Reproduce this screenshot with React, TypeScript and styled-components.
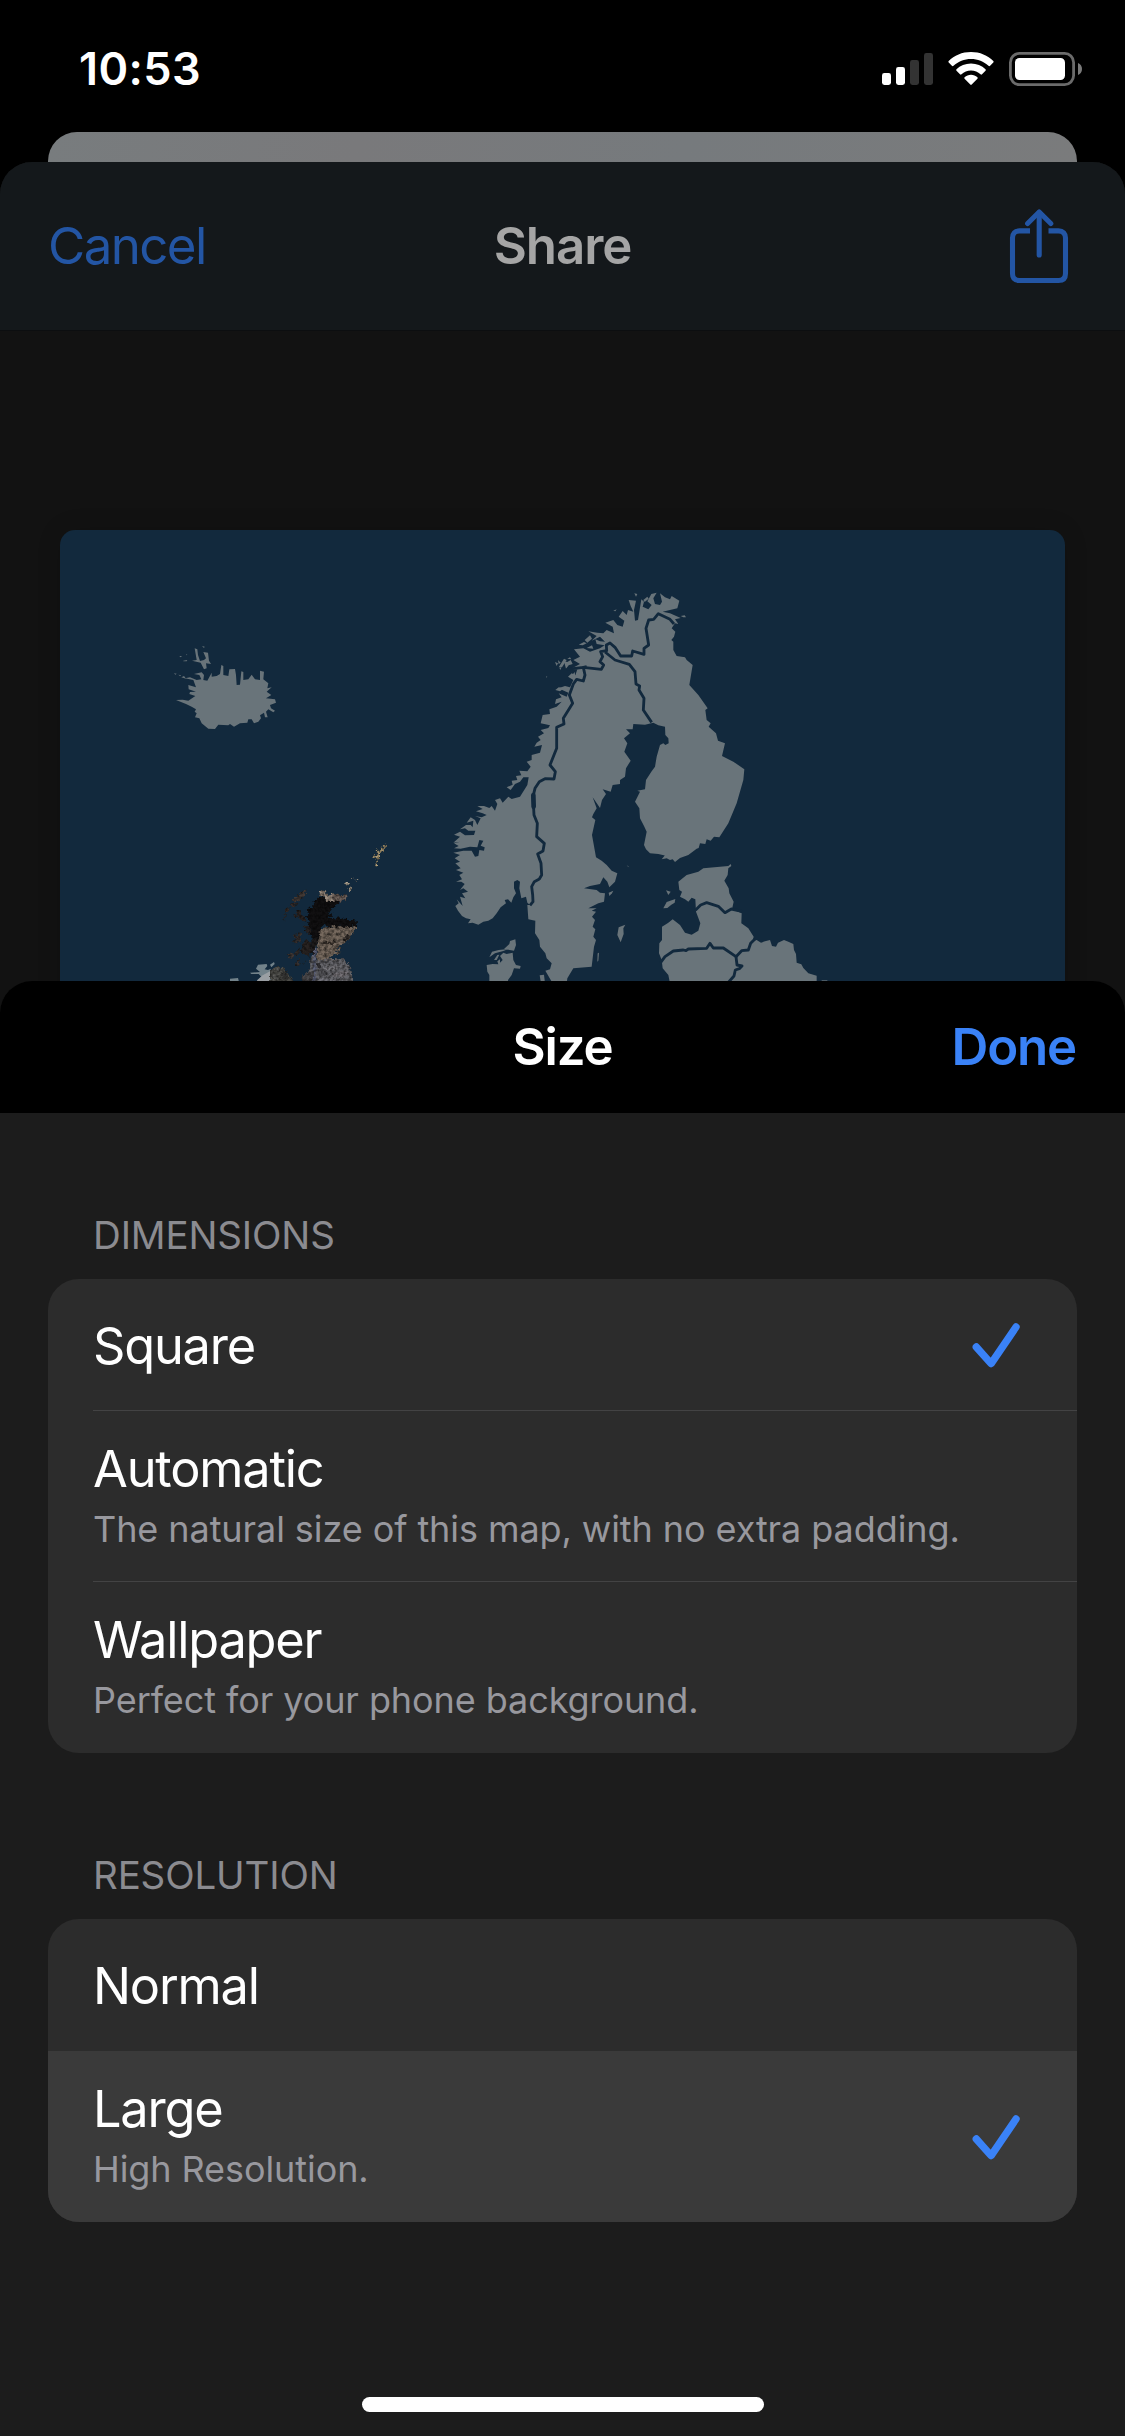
import React from "react";
import styled, { createGlobalStyle } from "styled-components";

const GlobalStyle = createGlobalStyle`
  * { box-sizing: border-box; }
  html, body { margin: 0; background: #000; }
  body {
    font-family: Inter, "Liberation Sans", sans-serif;
    -webkit-font-smoothing: antialiased;
  }
`;

const Phone = styled.main`
  display: flex;
  flex-direction: column;
  width: 1125px;
  height: 2436px;
  overflow: hidden;
  background: #000;
`;

const StatusBar = styled.header`
  display: flex;
  flex: none;
  justify-content: space-between;
  align-items: flex-start;
  height: 132px;
  padding: 41px 43px 0 79px;
  color: #fff;
`;

const Clock = styled.time`
  font-size: 45px;
  font-weight: 600;
  line-height: 55px;
  letter-spacing: 0.4px;
`;

const StatusIcons = styled.div`
  display: flex;
  align-items: center;
  gap: 15px;
  padding-top: 11px;
`;

const BackSheet = styled.div`
  flex: none;
  height: 30px;
  margin: 0 48px;
  border-radius: 29px 29px 0 0;
  background: linear-gradient(100deg, #787c7e, #79797b 30%, #767a7d 62%, #7a7b7c);
`;

const ShareSheet = styled.section`
  display: flex;
  flex: none;
  flex-direction: column;
  height: 851px;
  border-radius: 32px 32px 0 0;
  overflow: hidden;
  background: #121212;
`;

const ShareBar = styled.div`
  display: grid;
  flex: none;
  grid-template-columns: 1fr auto 1fr;
  align-items: center;
  height: 169px;
  padding: 0 48px;
  border-bottom: 1px solid #0c0e10;
  background: #14181b;
`;

const BarTitle = styled.h1<{ $dim?: boolean }>`
  margin: 0;
  font-size: 51px;
  font-weight: 600;
  line-height: 62px;
  letter-spacing: -1.1px;
  color: ${(p) => (p.$dim ? "#a5a5a5" : "#fff")};
`;

const BarButton = styled.button<{ $strong?: boolean; $end?: boolean }>`
  justify-self: ${(p) => (p.$end ? "end" : "start")};
  padding: 0;
  border: 0;
  background: none;
  font-family: inherit;
  font-size: 51px;
  font-weight: ${(p) => (p.$strong ? 600 : 400)};
  line-height: 62px;
  letter-spacing: ${(p) => (p.$strong ? -1.2 : -1.6)}px;
  color: ${(p) => (p.$strong ? "#3a82f7" : "#2355a4")};
`;

const IconButton = styled.button`
  display: flex;
  justify-self: end;
  margin-right: 8px;
  padding: 0;
  border: 0;
  background: none;
`;

const MapCard = styled.div`
  flex: none;
  margin: 199px 60px 0;
  height: 483px;
  border-radius: 15px 15px 0 0;
  overflow: hidden;
  background: #12293d;
  box-shadow: 0 0 24px rgba(0, 0, 0, 0.14);
`;

const SizeSheet = styled.section`
  display: flex;
  flex: 1;
  flex-direction: column;
  margin-top: -32px;
  border-radius: 32px 32px 0 0;
  overflow: hidden;
  background: #1c1c1c;
  isolation: isolate;
`;

const SizeBar = styled.div`
  display: grid;
  flex: none;
  grid-template-columns: 1fr auto 1fr;
  align-items: center;
  height: 132px;
  padding: 0 49px;
  background: #000;
`;

const Section = styled.section`
  flex: none;
  padding: 99px 48px 0;
`;

const SectionLabel = styled.h2`
  margin: 0 0 21px;
  padding-left: 45px;
  font-size: 38.5px;
  font-weight: 400;
  line-height: 46px;
  letter-spacing: -0.15px;
  color: #8b8b90;
`;

const Group = styled.div`
  display: flex;
  flex-direction: column;
  border-radius: 31px;
  overflow: hidden;
  background: #2c2c2c;
`;

const Row = styled.div<{ $tall?: boolean; $active?: boolean }>`
  display: flex;
  padding-left: 45px;
  height: ${(p) => (p.$tall ? 171 : 132)}px;
  background: ${(p) => (p.$active ? "#3a3a3a" : "transparent")};
`;

const RowBody = styled.div<{ $line?: boolean }>`
  display: flex;
  flex: 1;
  align-items: center;
  justify-content: space-between;
  padding-right: 57px;
  border-bottom: ${(p) => (p.$line ? "1px solid #434344" : "0")};
`;

const RowTitle = styled.div`
  font-size: 50.5px;
  line-height: 60px;
  letter-spacing: -1.2px;
  color: #fff;
`;

const RowNote = styled.div`
  margin-top: 8px;
  font-size: 36px;
  line-height: 44px;
  letter-spacing: -0.08px;
  color: #98989e;
`;

const RowText = styled.div<{ $tall?: boolean }>`
  align-self: ${(p) => (p.$tall ? "flex-start" : "center")};
  padding-top: ${(p) => (p.$tall ? 28 : 2)}px;
`;

const HomeIndicator = styled.div`
  flex: none;
  width: 402px;
  height: 15px;
  margin: auto auto 24px 362px;
  border-radius: 8px;
  background: #fff;
`;

function SignalIcon() {
  return (
    <svg width="51" height="34" viewBox="0 0 51 34">
      <rect x="0" y="21" width="9" height="12" rx="2.4" fill="#fff" />
      <rect x="14" y="15" width="9" height="18" rx="2.4" fill="#fff" />
      <rect x="28" y="8" width="9" height="25" rx="2.4" fill="#333" />
      <rect x="42" y="1" width="9" height="32" rx="2.4" fill="#333" />
    </svg>
  );
}

function WifiIcon() {
  return (
    <svg width="46" height="34" viewBox="0 0 46 34" fill="#fff">
      <path d="M23 0C31.800 0 39.800 3.400 45.300 9C45.800 9.500 45.800 10.100 45.300 10.600L42.100 13.800C41.600 14.300 41 14.300 40.500 13.800C35.800 9.500 29.700 7 23 7C16.300 7 10.200 9.500 5.500 13.800C5 14.300 4.400 14.300 3.900 13.800L.7 10.600C.2 10.100 .2 9.500 .7 9C6.200 3.400 14.200 0 23 0Z" />
      <path d="M23 11.500C28.700 11.500 33.800 13.700 37.500 17.300C38 17.800 38 18.300 37.500 18.800L34 22.300C33.500 22.800 33 22.800 32.500 22.300C30 19.900 26.700 18.500 23 18.500C19.300 18.500 16 19.900 13.500 22.300C13 22.800 12.500 22.800 12 22.300L8.500 18.800C8 18.300 8 17.800 8.500 17.300C12.200 13.700 17.300 11.500 23 11.500Z" />
      <path d="M23 22.800C25.400 22.800 27.700 23.700 29.400 25.200C29.900 25.700 29.900 26.200 29.400 26.700L23.700 32.600C23.200 33.100 22.800 33.100 22.300 32.600L16.600 26.700C16.100 26.200 16.100 25.700 16.600 25.200C18.300 23.700 20.600 22.800 23 22.800Z" />
    </svg>
  );
}

function BatteryIcon() {
  return (
    <svg width="73" height="34" viewBox="0 0 73 34">
      <rect x="1.400" y="1.400" width="63.200" height="31.200" rx="9" fill="none" stroke="#6b6b6b" strokeWidth="2.800" />
      <rect x="6" y="6" width="50" height="22" rx="4.500" fill="#fff" />
      <path d="M69 11C71.500 11.800 73 14.200 73 17C73 19.800 71.500 22.200 69 23Z" fill="#7a7a7a" />
    </svg>
  );
}

function ShareIcon() {
  return (
    <svg width="60" height="75" viewBox="0 0 60 75" fill="none" stroke="#2355a4" strokeWidth="5.100">
      <path d="M21 24.400H10.500C6 24.400 3.500 27 3.500 31.500V67C3.500 71.500 6 74 10.500 74H49.500C54 74 56.500 71.500 56.500 67V31.500C56.500 27 54 24.400 49.500 24.400H39.500" transform="translate(0 -2.500)" />
      <path d="M30.200 3.500V46" strokeLinecap="round" />
      <path d="M18.600 14.500L30.200 3L41.800 14.500" strokeLinecap="round" strokeLinejoin="round" />
    </svg>
  );
}

function CheckIcon() {
  return (
    <svg width="48" height="47" viewBox="0 0 48 47" fill="none">
      <path d="M4.300 26L19.100 42.600L44 6" stroke="#3a82f7" strokeWidth="7.400" strokeLinecap="round" strokeLinejoin="round" />
    </svg>
  );
}

const SEA = "#12293d";
const LAND = "#69747a";

const SCANDINAVIA =
  "270,975 262,968 258,950 244,955 238,925 240,905 232,900 222,905 222,925 228,940 220,952 214,968 204,958 194,960 198,970 182,982 170,1000 158,1015 145,1022 130,1025 115,1034 98,1028 84,1030 92,1018 78,1015 66,1008 54,992 46,978 56,970 50,958 68,978 60,950 76,955 66,940 84,935 70,925 60,930 74,912 64,905 48,905 66,898 58,885 70,878 48,870 62,865 46,850 60,845 44,835 60,825 40,818 70,812 95,812 105,830 115,828 118,810 132,812 134,802 122,797 130,782 118,780 112,802 90,800 62,806 42,805 56,798 42,790 60,785 40,788 60,770 42,764 60,755 75,766 102,765 106,752 85,752 75,745 60,748 78,735 92,735 98,742 100,722 80,728 92,712 105,720 112,735 122,715 105,708 125,712 140,705 128,700 108,694 128,687 112,678 132,678 148,684 155,678 165,692 172,672 165,660 180,655 188,668 205,650 215,657 240,650 262,615 266,592 250,592 240,605 225,612 212,630 200,622 218,614 215,602 232,600 228,588 244,586 238,572 262,574 272,560 260,545 275,540 275,525 300,518 306,495 283,500 290,488 302,480 294,470 312,460 302,450 325,444 330,436 302,430 308,405 330,402 328,388 350,380 365,365 345,372 348,358 365,352 356,340 380,350 385,338 355,325 375,318 390,322 400,300 384,290 395,280 406,286 412,268 386,270 420,252 400,240 420,230 402,208 430,205 450,215 480,205 494,196 470,192 466,178 480,184 495,185 480,170 455,182 470,168 445,154 472,158 490,160 500,150 522,160 518,140 496,128 520,120 532,135 548,140 553,122 536,110 548,93 560,105 564,90 580,95 572,78 566,60 588,62 582,90 585,122 594,120 598,95 604,58 612,65 608,80 625,88 635,75 622,64 634,42 650,38 640,55 645,72 660,75 666,65 660,40 675,52 690,58 695,48 718,62 712,85 690,90 668,95 690,100 722,114 705,118 715,132 705,130 695,145 706,155 702,170 694,180 700,185 700,210 710,228 735,232 740,240 758,255 748,315 775,345 803,385 796,390 800,420 812,430 806,440 828,460 834,482 855,490 846,528 880,545 913,568 910,600 890,670 865,730 838,772 822,770 812,782 800,778 796,792 780,790 776,804 770,806 745,825 720,834 705,846 698,838 690,840 680,835 665,838 686,812 682,828 668,825 655,822 630,820 618,808 612,795 620,755 612,738 600,715 598,685 585,665 600,635 592,632 615,628 618,600 635,574 645,560 650,530 660,495 670,490 676,495 686,490 685,475 676,465 675,440 655,436 640,428 615,434 580,432 578,448 558,448 570,460 552,475 562,490 553,515 572,542 558,565 555,590 540,600 540,612 518,615 512,635 488,628 498,642 486,660 480,684 458,652 470,685 460,702 456,712 466,720 456,765 468,832 485,842 500,855 515,872 532,880 525,905 508,922 502,905 490,892 480,912 450,918 432,925 470,930 480,938 495,940 492,965 475,970 445,985 470,985 455,992 468,995 456,1010 465,1020 458,1040 466,1048 460,1070 468,1080 462,1100 455,1160 400,1165 382,1195 380,1210 338,1210 316,1172 330,1168 335,1150 320,1135 316,1120 300,1100 298,1080 285,1060 286,1022 265,1018 262,975";

const BALTICS =
  "715,905 740,885 775,875 790,865 865,858 872,852 874,858 865,865 863,885 853,902 866,925 868,940 881,965 876,988 905,1000 904,1030 925,1045 941,1070 938,1082 950,1080 963,1088 975,1084 990,1080 996,1098 1008,1100 1014,1088 1032,1080 1045,1085 1060,1092 1062,1110 1068,1122 1070,1148 1084,1153 1090,1164 1105,1180 1130,1187 1130,1210 690,1210 685,1185 668,1165 665,1140 657,1120 658,1090 666,1080 666,1040 685,1028 698,1018 720,1035 735,1058 755,1064 775,1052 781,1030 768,995 766,958 755,953 745,965 735,958 720,950 726,935 718,930";

const ICELAND =
  "48,210 68,209 85,212 106,198 88,192 90,186 108,185 86,178 85,165 108,172 100,150 75,145 90,142 110,150 124,148 118,135 102,132 125,127 132,135 130,150 142,152 155,128 155,140 170,138 180,132 184,105 190,108 190,135 205,138 208,118 225,117 228,135 230,165 240,164 244,124 250,126 250,150 265,148 275,134 285,148 300,150 300,122 312,125 310,148 325,160 322,175 335,172 320,185 334,195 318,205 345,208 348,218 330,225 333,235 345,242 340,247 325,238 318,245 323,262 315,262 312,248 300,256 303,265 295,275 282,280 275,268 265,268 262,278 240,280 222,290 210,282 205,286 175,284 165,297 145,296 125,280 118,265 105,262 110,250 104,245 108,238 95,230 78,222";

const BORDERS = [
  "M270 976L279 965 278 945 275 920 283 905 298 897 305 885 303 850 293 822 309 813 313 790 290 770 292 730 282 705 279 650 285 625 298 605 315 596 342 597 346 575 330 555 350 505 350 442 372 432 370 415 398 370 388 345 400 312 410 298 430 303 435 285 430 262 484 268 491 255 480 245 488 230 482 215 500 212 499 195 510 189 525 202 542 228 575 228 578 213 612 223 612 205 626 195 618 145 626 120 641 118 655 101 690 118 702 132",
  "M380 268L430 262M440 260L430 262",
  "M495 216L525 240 568 253 585 275 588 312 599 318 597 330 612 355 610 390 635 427",
  "M766 991L782 975 800 968 835 979 855 998 874 987 906 994",
  "M660 1150L675 1130 700 1113 730 1110 738 1112 745 1107 800 1105 810 1090 820 1104 850 1104 888 1130 905 1112 925 1110 932 1090 945 1077",
  "M888 1130L891 1155 906 1158 898 1166 886 1170 882 1188 866 1206",
];

const SMALL_ISLANDS = [
  "583,40 592,42 588,50", "610,60 622,50 626,56 614,66", "345,246 354,250 350,258", "356,262 372,236 380,240 366,262",
  "372,244 382,246 392,240 398,252 386,256 378,266", "354,240 362,248 356,252", "382,236 390,232 394,238",
  "416,194 432,186 440,190 428,196", "434,180 450,166 456,176 442,188", "440,204 456,196 460,206", "318,289 322,290 320,293",
  "358,264 364,262 362,270", "396,286 404,276 406,290 414,292 400,300", "346,330 356,322 372,325 360,334",
  "520,92 530,88 526,94", "734,106 738,112 730,112 722,108", "670,985 680,966 706,957 704,968 694,974 682,984", "678,931 692,935 685,945",
  "536,1042 556,1034 550,1045 551,1062 542,1087 532,1065", "473,1120 477,1118 475,1142 472,1145",
  "299,1186 312,1184 315,1210 303,1210", "506,938 520,932 516,940 508,948", "560,855 564,860 568,862",
  "192,1107 208,1092 210,1083 226,1078 228,1095 222,1112", "148,1132 156,1115 176,1110 205,1107 190,1113 165,1120",
  "140,1155 158,1152 175,1153 172,1144 180,1138 180,1148 188,1140 180,1128 190,1118 200,1122 218,1118 220,1140 228,1155 242,1158 240,1166 222,1165 215,1185 204,1200 204,1210 148,1210 148,1185 142,1175",
  "162,1140 172,1125 178,1124 170,1140", "1145,1201 1162,1201 1162,1204 1145,1204",
];

const WEST_FJORDS = [
  "96,92 110,90 104,55 112,58 114,75 120,93 132,90 138,85 130,66 144,68 147,92 153,102 138,100 140,115 132,118 122,98",
  "126,48 134,50 132,54", "58,78 66,78 62,82", "70,92 82,90 80,94 70,94", "42,130 50,131 46,134", "55,134 64,136 60,138", "78,72 82,74 80,76", "64,142 72,138 78,146",
];

const BRITAIN: Array<[string, string]> = [
  ["#87795c", "518,82 520,76 532,72 526,60 534,58 538,66 542,52 550,54 552,45 559,43 556,54 546,68 540,70 540,86 534,90 532,110 525,109 530,88"],
  ["#8a8173", "434,160 440,152 444,158 450,152 446,166 438,166"],
  ["#8a8173", "454,141 459,143 456,148 453,146"],
  ["#8a8173", "466,148 473,147 470,154"],
  ["#8a8173", "452,168 457,170 448,188 446,180"],
  ["#332c29", "278,206 290,200 296,188 304,190 320,177 318,192 304,210 290,212 280,216"],
  ["#272120", "272,222 286,216 298,222 284,230 274,230"],
  ["#29221f", "256,236 270,230 266,242 258,252 254,272 249,266 256,252"],
  ["#211c1b", "280,252 292,254 288,240 302,240 304,252 312,262 320,276 306,272 294,262 282,262"],
  ["#1f1b1b", "308,292 322,286 336,296 330,312 318,310 322,302"],
  ["#2a2524", "274,312 290,318 296,306 308,312 300,324 312,332 294,338 278,336 288,326"],
  ["#312c2b", "264,370 276,366 284,372 280,384 266,382"],
  ["#26211f", "284,368 292,360 300,352 298,366 286,378"],
  ["#1f1b1a", "302,366 308,350 304,340 320,330 334,340 338,362 326,386 330,372 316,378"],
  ["#2a2626", "284,404 296,388 300,394 294,410"],
  ["#211e1d", "308,396 316,390 314,406"],
  ["#786d63", "358,184 368,180 378,186 386,194 400,189 406,194 400,214 380,214 376,200 360,198"],
  ["#554b46", "400,192 428,196 441,192 438,210 420,216 398,214"],
  ["#5b5148", "350,296 400,288 470,286 466,300 450,322 442,338 410,352 426,354 404,366 426,368 398,378 386,386 426,388 400,396 350,400"],
  ["#0d0c0d", "346,210 362,200 378,202 380,213 420,213 412,224 390,238 398,244 384,250 402,258 382,264 396,268 420,262 440,268 470,272 471,290 458,284 450,296 440,286 432,296 420,286 410,296 400,286 388,294 372,284 358,296 360,320 350,340 340,330 330,312 336,300 322,280 330,274 316,262 326,252 320,238 334,232"],
  ["#191717", "334,330 350,320 348,372 340,380 334,356"],
  ["#25211f", "434,322 444,310 452,314 444,332 432,336"],
  ["#28231f", "366,336 408,334 410,341 376,343"],
  ["#4e4e52", "344,390 428,387 448,402 457,425 457,460 304,460 306,438 324,426 334,408 328,392 336,374 346,378"],
  ["#484c5e", "342,356 350,352 348,460 338,460"],
  ["#242326", "348,400 364,402 362,411 348,410"],
  ["#39383a", "304,452 306,438 322,426 340,424 338,456 304,460"],
  ["#5c5b5f", "372,412 400,404 424,410 412,418 380,422"],
  ["#5b585c", "396,430 432,424 450,432 428,442 400,440"],
  ["#434347", "356,426 384,424 392,432 366,440"],
  ["#58585e", "356,444 400,446 420,452 400,460 356,460"],
  ["#3b3b38", "210,420 226,411 240,412 254,418 264,430 276,446 276,460 210,460"],
  ["#4b4b4a", "224,418 242,416 236,428"],
  ["#282827", "240,430 258,426 268,446 250,452"],
  ["#484846", "216,436 232,432 236,446 220,452"],
];

const IRELAND: Array<[string, string]> = [
  ["#72828a", "150,428 180,426 168,416 174,404 200,402 202,408 194,418 204,420 212,416 212,460 168,460 184,440 176,432 154,432"],
  ["#72828a", "210,404 222,396 224,402 214,412"],
  ["#72828a", "90,446 114,444 118,460 90,460"],
  ["#9a9fa3", "172,450 188,436 210,424 210,460 168,460"],
];

function EuropeMap() {
  return (
    <svg width="1005" height="451" viewBox="-1140 -150 3015 1353" fill={LAND} strokeLinejoin="round">
      <defs>
        <filter id="stone" x="-5%" y="-5%" width="110%" height="110%" colorInterpolationFilters="sRGB">
          <feTurbulence type="fractalNoise" baseFrequency="0.11" numOctaves="3" seed="7" result="noise" />
          <feDisplacementMap in="SourceGraphic" in2="noise" scale="16" xChannelSelector="R" yChannelSelector="G" result="rough" />
          <feColorMatrix in="noise" type="matrix" values="0 0 1.6 0 -0.05  0 0 1.6 0 -0.05  0 0 1.6 0 -0.05  0 0 0 0 1" result="grain" />
          <feComposite in="rough" in2="grain" operator="arithmetic" k1="1" k2="0.3" k3="0" k4="0" result="shaded" />
          <feComposite in="shaded" in2="rough" operator="in" />
        </filter>
      </defs>
      <polygon points={SCANDINAVIA} />
      <polygon points={BALTICS} />
      {SMALL_ISLANDS.map((points) => (
        <polygon key={points} points={points} />
      ))}
      <g fill="none" stroke={SEA} strokeWidth="8.500">
        {BORDERS.map((d) => (
          <path key={d} d={d} />
        ))}
        <path d="M280 645L281 680" strokeWidth="14" strokeLinecap="round" />
      </g>
      <g transform="translate(-840 150)">
        <polygon points={ICELAND} />
        {WEST_FJORDS.map((points) => (
          <polygon key={points} points={points} />
        ))}
      </g>
      <g transform="translate(-720 750)">
        {IRELAND.map(([fill, points]) => (
          <polygon key={points} points={points} fill={fill} />
        ))}
        <g filter="url(#stone)">
          {BRITAIN.map(([fill, points]) => (
            <polygon key={points} points={points} fill={fill} />
          ))}
        </g>
      </g>
    </svg>
  );
}

type Option = { title: string; note?: string; checked?: boolean; active?: boolean; line?: boolean };

const SECTIONS: Array<{ label: string; options: Option[] }> = [
  {
    label: "DIMENSIONS",
    options: [
      { title: "Square", checked: true, line: true },
      { title: "Automatic", note: "The natural size of this map, with no extra padding.", line: true },
      { title: "Wallpaper", note: "Perfect for your phone background." },
    ],
  },
  {
    label: "RESOLUTION",
    options: [
      { title: "Normal" },
      { title: "Large", note: "High Resolution.", checked: true, active: true },
    ],
  },
];

function OptionRow({ title, note, checked, active, line }: Option) {
  const tall = Boolean(note);
  return (
    <Row $tall={tall} $active={active}>
      <RowBody $line={line}>
        <RowText $tall={tall}>
          <RowTitle>{title}</RowTitle>
          {note && <RowNote>{note}</RowNote>}
        </RowText>
        {checked && <CheckIcon />}
      </RowBody>
    </Row>
  );
}

export default function App() {
  return (
    <>
      <GlobalStyle />
      <Phone>
        <StatusBar>
          <Clock>10:53</Clock>
          <StatusIcons>
            <SignalIcon />
            <WifiIcon />
            <BatteryIcon />
          </StatusIcons>
        </StatusBar>
        <BackSheet />
        <ShareSheet>
          <ShareBar>
            <BarButton>Cancel</BarButton>
            <BarTitle $dim>Share</BarTitle>
            <IconButton aria-label="Share">
              <ShareIcon />
            </IconButton>
          </ShareBar>
          <MapCard>
            <EuropeMap />
          </MapCard>
        </ShareSheet>
        <SizeSheet>
          <SizeBar>
            <span />
            <BarTitle>Size</BarTitle>
            <BarButton $strong $end>
              Done
            </BarButton>
          </SizeBar>
          {SECTIONS.map((section) => (
            <Section key={section.label}>
              <SectionLabel>{section.label}</SectionLabel>
              <Group>
                {section.options.map((option) => (
                  <OptionRow key={option.title} {...option} />
                ))}
              </Group>
            </Section>
          ))}
          <HomeIndicator />
        </SizeSheet>
      </Phone>
    </>
  );
}
